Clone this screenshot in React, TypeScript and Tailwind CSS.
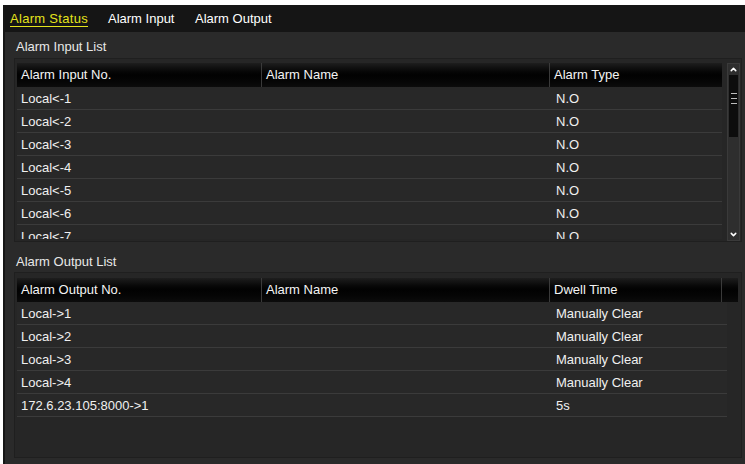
import { ChevronUp, ChevronDown } from 'lucide-react';

const font = { fontFamily: '"Liberation Sans", Arial, sans-serif' };

const inputRows = ['Local<-1', 'Local<-2', 'Local<-3', 'Local<-4', 'Local<-5', 'Local<-6', 'Local<-7'];

const outputRows: Array<[string, string]> = [
  ['Local->1', 'Manually Clear'],
  ['Local->2', 'Manually Clear'],
  ['Local->3', 'Manually Clear'],
  ['Local->4', 'Manually Clear'],
  ['172.6.23.105:8000->1', '5s'],
];

function HeaderCell({ label, w, last }: { label: string; w: string; last?: boolean }) {
  return (
    <div className={`${w} h-full flex items-center pl-[4px] ${last ? '' : 'border-r border-[#3a3a3a]'}`}>
      {label}
    </div>
  );
}

function Header({ cols, extra }: { cols: string[]; extra?: boolean }) {
  return (
    <div className="h-[24px] shrink-0 flex text-[13px] text-[#f4f4f4] bg-gradient-to-b from-[#1e1e1e] via-[#020202] to-[#0c0c0c]">
      <HeaderCell label={cols[0]} w="w-[245px]" />
      <HeaderCell label={cols[1]} w="w-[288px]" />
      <HeaderCell label={cols[2]} w="w-[172px]" last={!extra} />
      {extra && <div className="w-[16px] h-full" />}
    </div>
  );
}

function Row({ a, c }: { a: string; c: string }) {
  return (
    <div className="h-[23px] shrink-0 flex items-center pt-[2px] text-[13px] text-[#f0f0f0] border-b border-[#3b3b3b] bg-[#282828]">
      <div className="w-[245px] pl-[4px]">{a}</div>
      <div className="w-[288px]" />
      <div className="w-[172px] pl-[6px]">{c}</div>
    </div>
  );
}

function Scrollbar() {
  return (
    <div className="w-[13px] ml-[5px] h-[178px] bg-[#2e2e2e] border border-[#3a3a3a] flex flex-col items-center">
      <ChevronUp className="w-[11px] h-[9px] text-white mt-[1px]" strokeWidth={4} />
      <div className="w-[9px] h-[62px] bg-[#0d0d0d] mt-[1px] flex flex-col items-center pt-[18px] gap-[4px]">
        <div className="w-[6px] h-px bg-[#bdbdbd]" />
        <div className="w-[6px] h-px bg-[#bdbdbd]" />
        <div className="w-[6px] h-px bg-[#bdbdbd]" />
      </div>
      <div className="flex-1" />
      <ChevronDown className="w-[11px] h-[9px] text-white mb-[1px]" strokeWidth={4} />
    </div>
  );
}

export default function App() {
  return (
    <div className="w-[745px] h-[464px] bg-white pt-[5px] pl-[3px] overflow-hidden" style={font}>
      <div className="h-[459px] bg-[#2a2a2a] border-l-2 border-[#161616] flex flex-col">
        {/* tabs */}
        <div className="h-[27px] shrink-0 bg-[#151515] flex items-center pl-[5px] text-[13px] text-white">
          <span className="w-[98px]">
            <span className="text-[#e4e31c] underline underline-offset-[3px] decoration-[#e4e31c] tracking-[0.3px]">Alarm Status</span>
          </span>
          <span className="w-[87px]">Alarm Input</span>
          <span>Alarm Output</span>
        </div>

        <div className="pl-[9px] pr-[3px]">
          <div className="h-[26px] flex items-center pl-[2px] pt-[4px] text-[13px] text-[#e8e8e8]">Alarm Input List</div>

          <div className="h-[184px] border border-[#1f1f1f] bg-[#262626] pl-[2px] pt-[4px] flex">
            <div className="w-[705px] flex flex-col">
              <Header cols={['Alarm Input No.', 'Alarm Name', 'Alarm Type']} />
              <div className="h-[152px] overflow-hidden flex flex-col">
                {inputRows.map((r) => (
                  <Row key={r} a={r} c="N.O" />
                ))}
              </div>
            </div>
            <Scrollbar />
          </div>

          <div className="h-[30px] flex items-center pl-[2px] pt-[10px] text-[13px] text-[#e8e8e8]">Alarm Output List</div>

          <div className="h-[186px] border border-[#1f1f1f] bg-[#262626] pl-[2px] pt-[5px] pr-[2px]">
            <div className="w-[721px]">
              <Header cols={['Alarm Output No.', 'Alarm Name', 'Dwell Time']} extra />
            </div>
            <div className="w-[710px] flex flex-col">
              {outputRows.map(([a, c]) => (
                <Row key={a} a={a} c={c} />
              ))}
            </div>
          </div>
        </div>
      </div>
    </div>
  );
}
